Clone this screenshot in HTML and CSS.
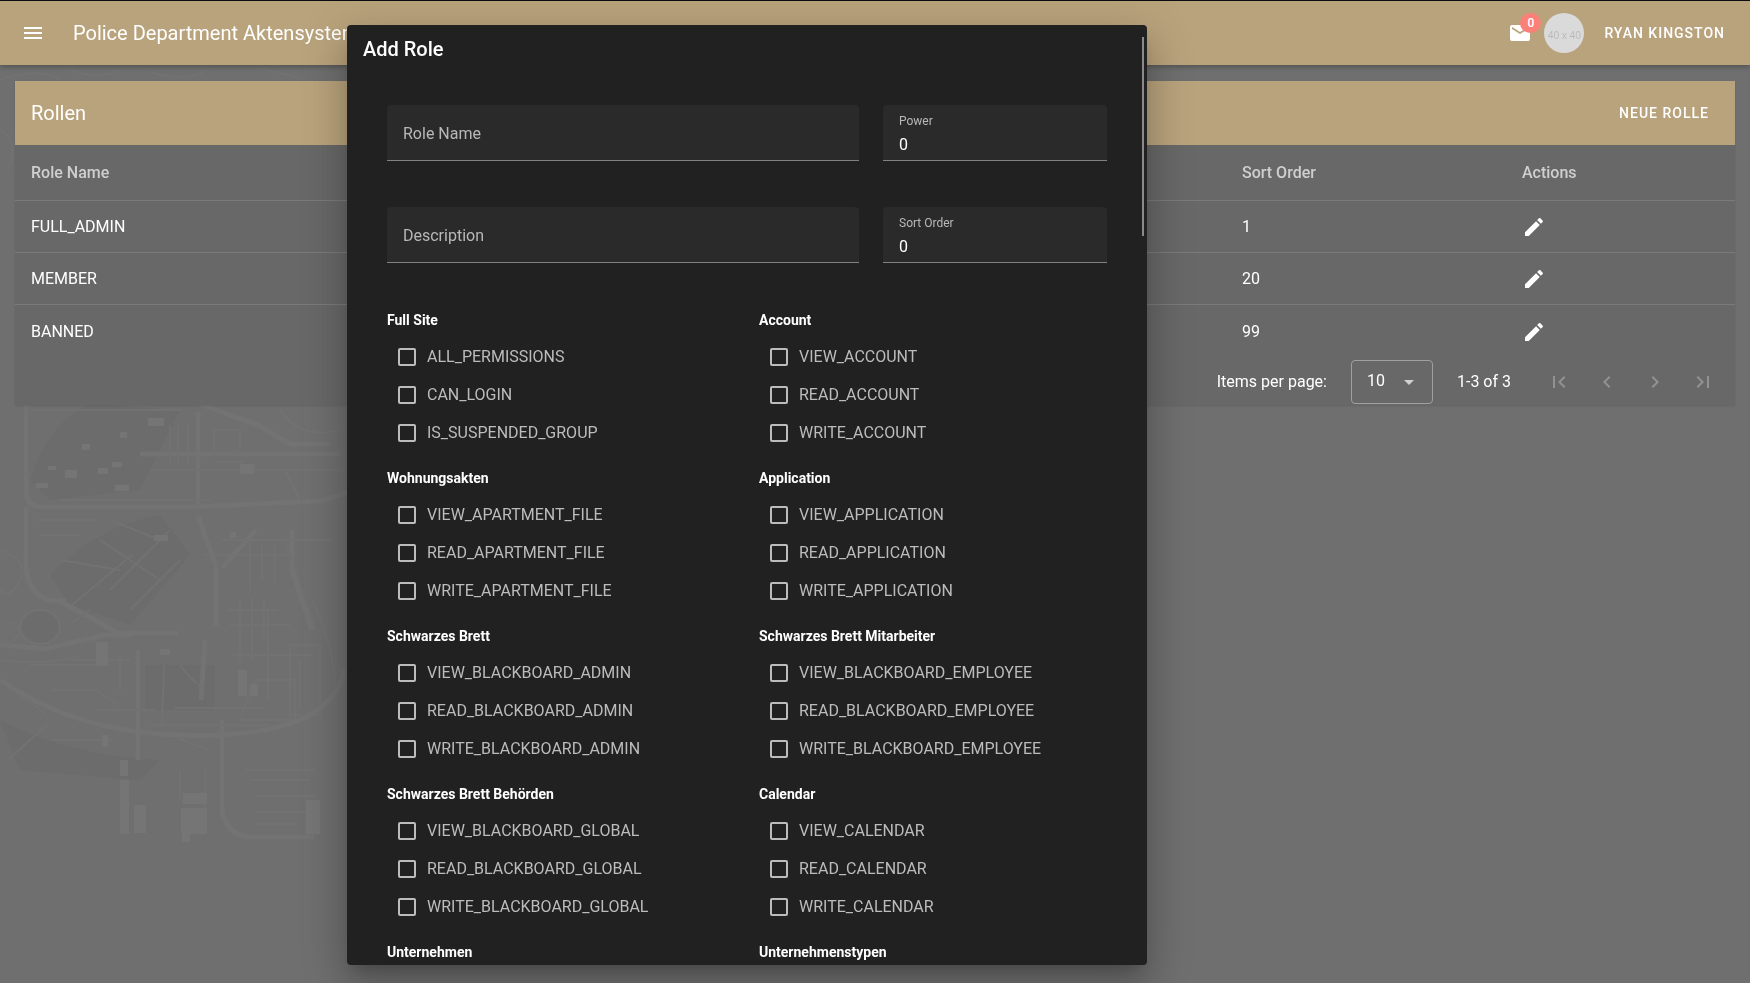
FILE: index.html
```html
<!DOCTYPE html>
<html lang="de">
<head>
<meta charset="utf-8">
<meta name="viewport" content="width=device-width, initial-scale=1">
<title>Police Department Aktensystem</title>
<link rel="stylesheet" href="styles.css">
</head>
<body>
<svg class="map" viewBox="0 0 400 983" aria-hidden="true">
  <g class="map-shade">
    <path d="M30 480q20-60 60-76l90 6-40 80-90 10zM50 575q50-50 110-60l30 40-60 70-60-20zM145 665h70v45h-70zM0 720q70 36 160 40l-20 20-120-10z"/>
    <ellipse cx="40" cy="627" rx="18" ry="16"/>
  </g>
  <g class="map-road">
    <path d="M26 400v90q0 16 14 17h150l130-6 80-24"/>
    <path d="M26 507v60q2 30 28 34l12 0M198 412v92M198 516l18 50v60M205 640l-4 60"/>
    <path d="M200 404l60 22 30 18h40M140 454l200 0M58 600l60 33h60"/>
    <path d="M0 645l45 4 60-14h25M0 680q70 48 160 54t140-14q40-20 44-50"/>
    <path d="M222 720v90q4 24 26 27h66M138 650v110M256 530l-34 38M292 530v40l20 60"/>
  </g>
  <g class="map-line">
    <path d="M150 470h190M60 500h150M222 540h110M205 555h90M132 555l-60 50M170 530l-60 60M180 560l-50 50"/>
    <path d="M240 600v60M252 598v62M264 598v40M232 655h80M255 680h40v40h-55zM290 645h30v70h-30z"/>
    <path d="M95 710h60M175 708h90M150 725h120M178 738l30 12M245 770h70M250 780h60M255 796h60"/>
    <path d="M0 80q40-14 60 0t10 24M70 70q30 10 50 0M0 130q20 10 8 40M150 72q40 12 60-4M260 68l40 10"/>
    <path d="M30 410h150M170 425v40M178 425v40M188 425v40M214 430h26v24h-26zM216 462h28M280 410q20 30 60 20M285 470l15 30"/>
    <path d="M20 695l26 19M10 758l38-34M52 690h44l24 16M164 665l-2 60M180 665q10 14 24 24"/>
    <path d="M250 540v50M262 545v35M275 545v40M285 540l30 90M228 610h50M230 625h60M268 610v90M300 660v50M312 600q20 40 24 90"/>
    <path d="M36 520h60M40 535h40M110 520l50 20M100 540l60 40M60 560l60 10M90 610l-20 14M120 655v36M70 660h60M30 665h70"/>
    <path d="M0 550q30 10 20 30t-20 10M0 660q40 6 80-4M52 740h60M180 770v30M205 770v60M256 812h54M256 824h40"/>
    <ellipse cx="40" cy="627" rx="20" ry="17"/>
    <ellipse cx="8" cy="632" rx="11" ry="10"/>
  </g>
  <g class="map-block">
    <path d="M148 418h16v8h-16zM120 432h7v6h-7zM82 444h8v6h-8zM65 470h12v8h-12zM112 462h10v5h-10zM48 466h8v4h-8zM36 483h12v5h-12zM98 468h10v6h-10zM115 485h14v6h-14zM240 464h14v10h-14zM154 535h14v6h-14zM230 532h6v6h-6z"/>
    <path d="M96 642h12v24h-12zM238 670h9v26h-9zM250 684h8v12h-8zM120 760h8v16h-8zM120 780h9v54h-9zM134 805h12v28h-12zM183 793h24v11h-24zM181 808h26v26h-26zM182 832h8v10h-8zM306 800h14v34h-14zM160 649h10v6h-10zM102 735h6v12h-6z"/>
  </g>
</svg>

<header class="app-bar">
  <button class="icon-button menu-button" type="button" aria-label="Menu">
    <svg class="icon" viewBox="0 0 24 24"><path d="M3 6h18v2H3V6m0 5h18v2H3v-2m0 5h18v2H3v-2z"/></svg>
  </button>
  <h1 class="app-title">Police Department Aktensystem</h1>
  <div class="account">
    <button class="icon-button mail" type="button" aria-label="Messages">
      <svg class="icon" viewBox="0 0 24 24"><path d="M20 8l-8 5-8-5V6l8 5 8-5m0-2H4c-1.110 0-2 .89-2 2v12a2 2 0 0 0 2 2h16a2 2 0 0 0 2-2V6a2 2 0 0 0-2-2z"/></svg>
      <span class="badge">0</span>
    </button>
    <span class="avatar">40 x 40</span>
    <button class="text-button" type="button">RYAN KINGSTON</button>
  </div>
</header>

<main class="page">
  <section class="card">
    <div class="card-bar">
      <h2 class="card-title">Rollen</h2>
      <button class="text-button" type="button">NEUE ROLLE</button>
    </div>
    <table class="roles">
      <colgroup><col class="col-name"><col class="col-sort"><col class="col-actions"></colgroup>
      <thead><tr><th>Role Name</th><th>Sort Order</th><th>Actions</th></tr></thead>
      <tbody>
        <tr><td>FULL_ADMIN</td><td>1</td><td><button class="icon-button" type="button" aria-label="Edit FULL_ADMIN"><svg class="icon" viewBox="0 0 24 24"><use href="#pencil"/></svg></button></td></tr>
        <tr><td>MEMBER</td><td>20</td><td><button class="icon-button" type="button" aria-label="Edit MEMBER"><svg class="icon" viewBox="0 0 24 24"><use href="#pencil"/></svg></button></td></tr>
        <tr><td>BANNED</td><td>99</td><td><button class="icon-button" type="button" aria-label="Edit BANNED"><svg class="icon" viewBox="0 0 24 24"><path id="pencil" d="M20.710 7.040c.39-.39.39-1.040 0-1.410l-2.340-2.340c-.37-.39-1.020-.39-1.410 0l-1.840 1.830 3.750 3.750M3 17.250V21h3.750L17.810 9.930l-3.750-3.750L3 17.250z"/></svg></button></td></tr>
      </tbody>
    </table>
    <div class="pager">
      <label for="per-page">Items per page:</label>
      <div class="select">
        <select id="per-page"><option>10</option><option>25</option></select>
        <svg class="icon caret" viewBox="0 0 24 24"><path d="M7 10l5 5 5-5H7z"/></svg>
      </div>
      <span class="range">1-3 of 3</span>
      <div class="page-buttons">
        <button class="icon-button" type="button" disabled aria-label="First page"><svg class="icon" viewBox="0 0 24 24"><path d="M18.410 16.590L13.820 12l4.590-4.590L17 6l-6 6 6 6 1.410-1.410M6 6h2v12H6V6z"/></svg></button>
        <button class="icon-button" type="button" disabled aria-label="Previous page"><svg class="icon" viewBox="0 0 24 24"><path d="M15.410 16.580L10.830 12l4.580-4.590L14 6l-6 6 6 6 1.410-1.420z"/></svg></button>
        <button class="icon-button" type="button" disabled aria-label="Next page"><svg class="icon" viewBox="0 0 24 24"><path d="M8.590 16.580L13.170 12 8.590 7.410 10 6l6 6-6 6-1.410-1.420z"/></svg></button>
        <button class="icon-button" type="button" disabled aria-label="Last page"><svg class="icon" viewBox="0 0 24 24"><path d="M5.590 7.410L10.180 12l-4.590 4.590L7 18l6-6-6-6-1.410 1.410M16 6h2v12h-2V6z"/></svg></button>
      </div>
    </div>
  </section>
</main>

<div class="overlay">
  <div class="dialog" role="dialog" aria-modal="true" aria-labelledby="dialog-title">
    <h2 class="dialog-title" id="dialog-title">Add Role</h2>
    <form class="form">
      <div class="fields">
        <div class="field"><input id="role-name" type="text" placeholder=" "><label for="role-name">Role Name</label></div>
        <div class="field"><input id="power" type="text" inputmode="numeric" value="0" placeholder=" "><label for="power">Power</label></div>
        <div class="field"><input id="description" type="text" placeholder=" "><label for="description">Description</label></div>
        <div class="field"><input id="sort-order" type="text" inputmode="numeric" value="0" placeholder=" "><label for="sort-order">Sort Order</label></div>
      </div>
      <div class="groups">
        <fieldset class="group"><legend>Full Site</legend>
          <label class="check"><input type="checkbox">ALL_PERMISSIONS</label>
          <label class="check"><input type="checkbox">CAN_LOGIN</label>
          <label class="check"><input type="checkbox">IS_SUSPENDED_GROUP</label></fieldset>
        <fieldset class="group"><legend>Account</legend>
          <label class="check"><input type="checkbox">VIEW_ACCOUNT</label>
          <label class="check"><input type="checkbox">READ_ACCOUNT</label>
          <label class="check"><input type="checkbox">WRITE_ACCOUNT</label></fieldset>
        <fieldset class="group"><legend>Wohnungsakten</legend>
          <label class="check"><input type="checkbox">VIEW_APARTMENT_FILE</label>
          <label class="check"><input type="checkbox">READ_APARTMENT_FILE</label>
          <label class="check"><input type="checkbox">WRITE_APARTMENT_FILE</label></fieldset>
        <fieldset class="group"><legend>Application</legend>
          <label class="check"><input type="checkbox">VIEW_APPLICATION</label>
          <label class="check"><input type="checkbox">READ_APPLICATION</label>
          <label class="check"><input type="checkbox">WRITE_APPLICATION</label></fieldset>
        <fieldset class="group"><legend>Schwarzes Brett</legend>
          <label class="check"><input type="checkbox">VIEW_BLACKBOARD_ADMIN</label>
          <label class="check"><input type="checkbox">READ_BLACKBOARD_ADMIN</label>
          <label class="check"><input type="checkbox">WRITE_BLACKBOARD_ADMIN</label></fieldset>
        <fieldset class="group"><legend>Schwarzes Brett Mitarbeiter</legend>
          <label class="check"><input type="checkbox">VIEW_BLACKBOARD_EMPLOYEE</label>
          <label class="check"><input type="checkbox">READ_BLACKBOARD_EMPLOYEE</label>
          <label class="check"><input type="checkbox">WRITE_BLACKBOARD_EMPLOYEE</label></fieldset>
        <fieldset class="group"><legend>Schwarzes Brett Behörden</legend>
          <label class="check"><input type="checkbox">VIEW_BLACKBOARD_GLOBAL</label>
          <label class="check"><input type="checkbox">READ_BLACKBOARD_GLOBAL</label>
          <label class="check"><input type="checkbox">WRITE_BLACKBOARD_GLOBAL</label></fieldset>
        <fieldset class="group"><legend>Calendar</legend>
          <label class="check"><input type="checkbox">VIEW_CALENDAR</label>
          <label class="check"><input type="checkbox">READ_CALENDAR</label>
          <label class="check"><input type="checkbox">WRITE_CALENDAR</label></fieldset>
        <fieldset class="group"><legend>Unternehmen</legend></fieldset>
        <fieldset class="group"><legend>Unternehmenstypen</legend></fieldset>
      </div>
    </form>
    <span class="scroll-thumb" aria-hidden="true"></span>
  </div>
</div>
</body>
</html>
```
FILE: styles.css
```css
* { box-sizing: border-box; }

body {
  margin: 0;
  min-height: 100vh;
  overflow: hidden;
  border-top: 1px solid #0c0c10;
  background: #6f6f6f;
  color: #fff;
  font: 400 16px/24px Roboto, "Liberation Sans", sans-serif;
}

h1, h2 { margin: 0; }

button, input, select { font: inherit; color: inherit; }

button {
  border: 0;
  padding: 0;
  background: none;
}

.icon {
  display: block;
  width: 24px;
  height: 24px;
  fill: currentColor;
}

.icon-button {
  display: grid;
  place-items: center;
  width: 48px;
  height: 48px;
}

.text-button {
  padding: 0 16px;
  height: 36px;
  font-size: 14px;
  font-weight: 500;
  letter-spacing: 1px;
}

/* Faint city map behind the page */
.map {
  position: fixed;
  z-index: -1;
  left: 0;
  top: 0;
  width: 400px;
  height: 983px;
  fill: none;
}
.map-shade { fill: #6c6c6c; }
.map-road { stroke: #737373; stroke-width: 5; }
.map-line { stroke: #727272; stroke-width: 2; }
.map-block { fill: #757575; }

.app-bar {
  position: relative;
  display: flex;
  align-items: center;
  height: 64px;
  padding: 0 9px;
  background: #b9a37c;
  box-shadow: 0 2px 5px rgba(0, 0, 0, .25);
}
.app-title {
  margin-left: 16px;
  font-size: 20px;
  font-weight: 400;
}
.account {
  display: flex;
  align-items: center;
  margin-left: auto;
}
.mail { position: relative; }
.badge {
  position: absolute;
  left: 24px;
  top: 4px;
  width: 21px;
  height: 20px;
  border-radius: 10px;
  background: #fa8078;
  font-size: 12px;
  font-weight: 500;
  line-height: 20px;
}
.avatar {
  width: 40px;
  height: 40px;
  margin-right: 4px;
  border-radius: 50%;
  background: #dadada;
  color: #b8b8b8;
  font: 10px/44px "Open Sans", sans-serif;
  text-align: center;
}

.page { padding: 16px 15px; }
.card {
  background: #686868;
  box-shadow: 0 1px 2px rgba(0, 0, 0, .1);
}
.card-bar {
  display: flex;
  align-items: center;
  justify-content: space-between;
  height: 64px;
  padding: 0 10px 0 16px;
  background: #b9a37c;
}
.card-title {
  font-size: 20px;
  font-weight: 400;
}

.roles {
  width: 100%;
  table-layout: fixed;
  border-collapse: separate;
  border-spacing: 0;
}
.col-sort { width: 280px; }
.col-actions { width: 229px; }
.roles th, .roles td {
  padding: 0 16px;
  border-bottom: 1px solid #7b7b7b;
  text-align: left;
}
.roles th {
  height: 56px;
  color: #cfcfcf;
  font-weight: 500;
}
.roles td { height: 52px; }
.roles tbody tr:last-child td {
  height: 53px;
  border-bottom: 0;
}
.roles .icon-button {
  width: 24px;
  height: 24px;
}

.pager {
  display: flex;
  align-items: center;
  justify-content: flex-end;
  height: 47px;
  padding: 0 8px;
}
.select {
  position: relative;
  margin: 0 24px;
}
.select select {
  display: block;
  appearance: none;
  width: 82px;
  height: 44px;
  padding: 0 0 2px 15px;
  border: 1px solid #a0a0a0;
  border-radius: 4px;
  background: none;
}
.caret {
  position: absolute;
  right: 12px;
  top: 10px;
  color: #d0d0d0;
  pointer-events: none;
}
.page-buttons {
  display: flex;
  margin-left: 24px;
  color: #929292;
}

.overlay {
  position: fixed;
  inset: 1px 256px 0 0;
  display: flex;
  justify-content: center;
  align-items: flex-start;
  padding: 24px 24px 18px;
  pointer-events: none;
}
.dialog {
  position: relative;
  display: flex;
  flex-direction: column;
  width: 100%;
  max-width: 800px;
  height: 100%;
  overflow: hidden;
  border-radius: 4px;
  background: #212121;
  box-shadow: 0 11px 15px -7px rgba(0, 0, 0, .2), 0 24px 38px 3px rgba(0, 0, 0, .14), 0 9px 46px 8px rgba(0, 0, 0, .12);
  pointer-events: auto;
}
.dialog-title {
  padding: 8px 16px;
  font-size: 20px;
  font-weight: 500;
  line-height: 32px;
}
.form {
  flex: 1;
  min-height: 0;
  overflow-y: auto;
  scrollbar-width: none;
  padding: 32px 40px 0;
}
.scroll-thumb {
  position: absolute;
  top: 12px;
  right: 3px;
  width: 2px;
  height: 199px;
  background: #8a8a8a;
}

.fields {
  display: grid;
  grid-template-columns: minmax(0, 1fr) 224px;
  gap: 46px 24px;
}
.field { position: relative; }
.field input {
  display: block;
  width: 100%;
  height: 56px;
  padding: 24px 16px 0;
  border: 0;
  border-bottom: 1px solid #828282;
  border-radius: 4px 4px 0 0;
  background: #2a2a2a;
}
.field label {
  position: absolute;
  left: 16px;
  top: 8px;
  color: #b8b8b8;
  font-size: 12px;
  line-height: 16px;
}
.field input:placeholder-shown + label {
  top: 17px;
  font-size: 16px;
  line-height: 24px;
}

.groups {
  display: grid;
  grid-template-columns: 1fr 1fr;
  gap: 14px 0;
  margin-top: 45px;
  margin-right: -24px;
}
.group {
  min-width: 0;
  margin: 0;
  padding: 0;
  border: 0;
}
.group legend {
  padding: 0 0 6px;
  font-size: 14px;
  font-weight: 700;
  line-height: 24px;
}
.check {
  display: flex;
  align-items: center;
  gap: 11px;
  height: 38px;
  padding-left: 11px;
  color: #bcbcbc;
}
.check input {
  appearance: none;
  width: 18px;
  height: 18px;
  margin: 0;
  border: 2px solid #bcbcbc;
  border-radius: 2px;
}
.check input:checked { background: #bcbcbc; }
```
